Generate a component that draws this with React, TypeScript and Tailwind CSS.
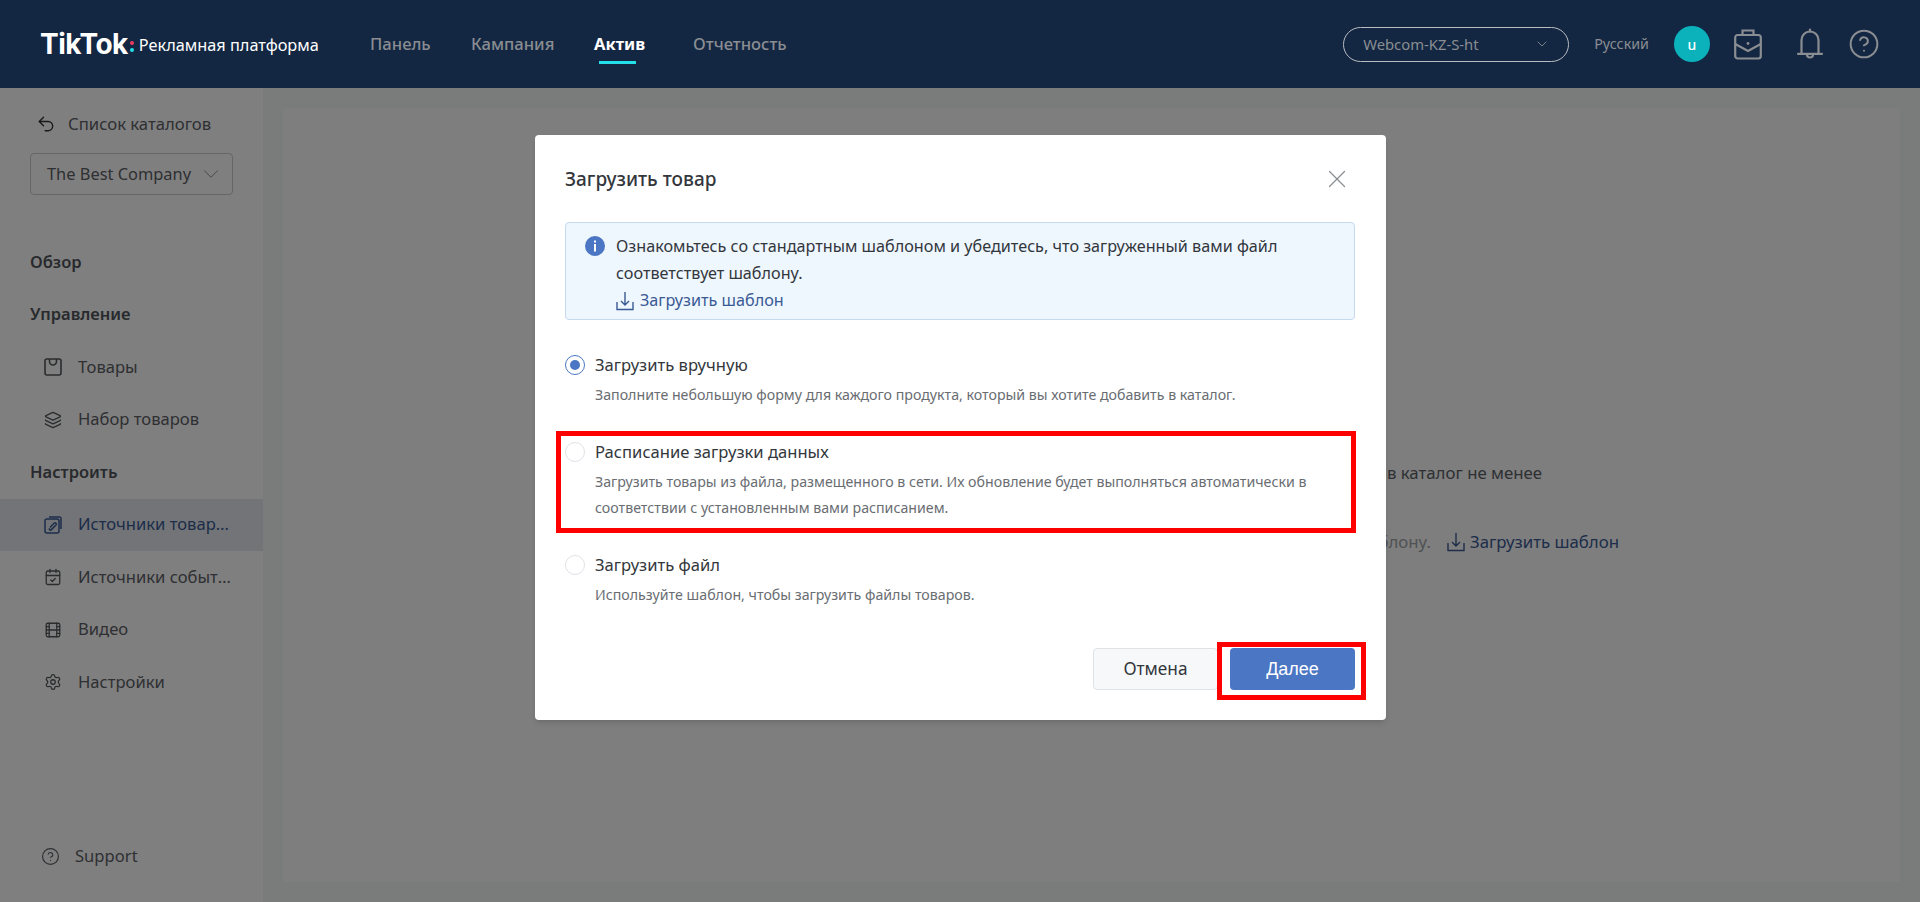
import type { ReactNode } from 'react'
import { ChevronDown, CircleHelp, Film, Layers, Settings, Undo2, X, CalendarCheck } from 'lucide-react'

const font = { fontFamily: '"Noto Sans", "Open Sans", Arial, sans-serif' }

const navItems = [
  { label: 'Панель', className: 'w-[101px]' },
  { label: 'Кампания', className: 'w-[123px]' },
  { label: 'Актив', className: 'w-[99px]', active: true },
  { label: 'Отчетность', className: '' },
]

function BagIcon() {
  return (
    <svg width="18" height="18" viewBox="0 0 18 18" fill="none" stroke="currentColor" strokeWidth="1.6">
      <rect x="1" y="1" width="16" height="16" rx="2" />
      <path d="M5.5 1v2.5a3.5 3.5 0 0 0 7 0V1" />
    </svg>
  )
}

function SourceIcon() {
  return (
    <svg width="18" height="18" viewBox="0 0 18 18" fill="none" stroke="currentColor" strokeWidth="1.5">
      <path d="M5 1h10.5A1.5 1.5 0 0 1 17 2.5V13" />
      <rect x="1" y="3" width="14" height="14" rx="2" />
      <path d="M6 11.5l4-4.2a1.3 1.3 0 0 1 2 1.7l-4.6 4.6a1.1 1.1 0 0 1-1.8-1.4" />
    </svg>
  )
}

function DownloadIcon() {
  return (
    <svg width="18" height="20" viewBox="0 0 18 20" fill="none" stroke="currentColor" strokeWidth="1.4">
      <path d="M1 11v7.5h16V11M9 1v13M5 10l4 4 4-4" />
    </svg>
  )
}

function CaseIcon() {
  return (
    <svg width="28" height="32" viewBox="0 0 28 32" fill="none" stroke="#8a8d91" strokeWidth="2.2">
      <path d="M8.5 7V2.5h11V7" />
      <rect x="1.2" y="7" width="25.6" height="23.5" rx="2.5" />
      <path d="M1.2 16 14 23l12.8-7" />
      <circle cx="14" cy="15.5" r="1.4" fill="#8a8d91" stroke="none" />
    </svg>
  )
}

function BellIcon() {
  return (
    <svg width="26" height="32" viewBox="0 0 26 32" fill="none" stroke="#8a8d91" strokeWidth="2.2" strokeLinecap="round">
      <path d="M4.5 25.5V12a8.5 8.5 0 0 1 17 0v13.5" />
      <path d="M1 25.8h24" />
      <path d="M13 1.5v2" />
      <path d="M10 26.5a3 3 0 0 0 6 0" />
    </svg>
  )
}

function SideItem({ icon, label, active }: { icon: ReactNode; label: string; active?: boolean }) {
  return (
    <div className={`flex h-[52.5px] items-center gap-[16px] pl-[44px] text-[16.6px] ${active ? 'bg-[#e6e9ee] text-[#3a5a94]' : 'text-[#5c6066]'}`}>
      <span className={`flex w-[18px] justify-center ${active ? 'text-[#3a5a94]' : 'text-[#55585c]'}`}>{icon}</span>
      <span className="w-[156px] truncate">{label}</span>
    </div>
  )
}

function SideHeading({ children }: { children: ReactNode }) {
  return <div className="flex h-[52.5px] items-center pl-[30px] text-[16.5px] font-semibold text-[#50545a]">{children}</div>
}

function RadioOption({ title, lines, checked }: { title: string; lines: string[]; checked?: boolean }) {
  return (
    <div className="flex gap-[10px]">
      <span className={`mt-[7px] flex h-[20px] w-[20px] shrink-0 items-center justify-center rounded-full border bg-white ${checked ? 'border-[#4a76c4]' : 'border-[#dfe2e6]'}`}>
        {checked && <span className="h-[10px] w-[10px] rounded-full bg-[#4a76c4]" />}
      </span>
      <div>
        <div className="text-[16.6px] leading-[34px] text-[#33373c]">{title}</div>
        {lines.map((line) => (
          <div key={line} className="text-[14.2px] leading-[26px] text-[#696d72]">{line}</div>
        ))}
      </div>
    </div>
  )
}

export default function App() {
  return (
    <div style={font} className="relative flex h-[902px] w-[1920px] flex-col overflow-hidden bg-white">
      <header className="flex h-[88px] shrink-0 items-center bg-[#132743] pl-[40px] pr-[40px]">
        <div className="flex w-[330px] items-center">
          <span className="text-[28px] font-bold leading-none tracking-[-0.5px] text-white" style={{ fontFamily: 'Inter, sans-serif' }}>TikTok</span>
          <span className="ml-[2px] mt-[4px] flex flex-col gap-[3px]">
            <span className="h-[4px] w-[4px] rounded-full bg-[#ee3a63]" />
            <span className="h-[4px] w-[4px] rounded-full bg-[#25dfe8]" />
          </span>
          <span className="ml-[5px] mt-[3px] text-[16.3px] text-white">Рекламная платформа</span>
        </div>
        <nav className="flex items-center text-[16.6px] font-medium text-[#8a8d91]">
          {navItems.map((item) => (
            <div key={item.label} className={`relative ${item.className} ${item.active ? 'font-bold text-white' : ''}`}>
              {item.label}
              {item.active && <span className="absolute left-[5px] top-[29px] h-[3px] w-[37px] bg-[#25dfe8]" />}
            </div>
          ))}
        </nav>
        <div className="ml-auto flex items-center">
          <div className="flex h-[35px] w-[226px] items-center justify-between rounded-full border border-[#b9bcc0] pl-[19px] pr-[18px] text-[14.8px] text-[#8a8d91]">
            <span>Webcom-KZ-S-ht</span>
            <ChevronDown size={16} strokeWidth={1.3} />
          </div>
          <span className="ml-[25px] text-[14.3px] text-[#8a8d91]">Русский</span>
          <span className="ml-[25px] flex h-[36px] w-[36px] items-center justify-center rounded-full bg-[#0bb2bb] text-[14px] font-medium text-white">u</span>
          <span className="ml-[24px] flex"><CaseIcon /></span>
          <span className="ml-[35px] flex"><BellIcon /></span>
          <CircleHelp className="ml-[25px] text-[#8a8d91]" size={32} strokeWidth={1.5} />
        </div>
      </header>

      <div className="flex min-h-0 flex-1">
        <aside className="flex w-[263px] shrink-0 flex-col bg-white">
          <div className="flex h-[50px] items-center gap-[12px] pl-[36px] pt-[22px] text-[16.7px] text-[#5c6066]">
            <Undo2 size={20} strokeWidth={1.7} className="text-[#333]" />
            Список каталогов
          </div>
          <div className="ml-[30px] mt-[15px] flex h-[42px] w-[203px] items-center justify-between rounded-[4px] border border-[#c9ccd0] pl-[16px] pr-[8px] text-[16.4px] text-[#5c6066]">
            <span className="whitespace-nowrap">The Best Company</span>
            <ChevronDown size={26} strokeWidth={0.9} className="text-[#8a8d91]" />
          </div>
          <div className="mt-[41px]">
            <SideHeading>Обзор</SideHeading>
            <SideHeading>Управление</SideHeading>
            <SideItem icon={<BagIcon />} label="Товары" />
            <SideItem icon={<Layers size={20} strokeWidth={1.7} />} label="Набор товаров" />
            <SideHeading>Настроить</SideHeading>
            <SideItem active icon={<SourceIcon />} label="Источники товаров" />
            <SideItem icon={<CalendarCheck size={20} strokeWidth={1.7} />} label="Источники событий" />
            <SideItem icon={<Film size={20} strokeWidth={1.7} />} label="Видео" />
            <SideItem icon={<Settings size={20} strokeWidth={1.7} />} label="Настройки" />
          </div>
          <div className="mb-[33px] mt-auto flex items-center gap-[15px] pl-[41px] text-[16.6px] text-[#5c6066]">
            <CircleHelp size={19} strokeWidth={1.5} />
            Support
          </div>
        </aside>

        <main className="flex-1 bg-[#f5f6f7] p-[20px]">
          <div className="flex h-full flex-col items-end rounded-[4px] bg-[#fdfdfd] pr-[281px] pt-[352px] text-[16.8px] text-[#5c6066]">
            <div className="mr-[77px] whitespace-nowrap">в каталог не менее</div>
            <div className="mt-[44px] flex items-center whitespace-nowrap">
              <span className="text-[#a0a4a8]">блону.</span>
              <span className="ml-[16px] flex items-center gap-[5px] text-[#3a5a94]"><DownloadIcon />Загрузить шаблон</span>
            </div>
          </div>
        </main>
      </div>

      <div className="absolute inset-x-0 bottom-0 top-[88px] bg-black/50" />

      <section className="absolute left-[535px] top-[135px] flex w-[851px] flex-col rounded-[4px] bg-white pb-[30px] pl-[30px] pr-[31px] pt-[31px] shadow-md">
        <div className="flex items-center justify-between">
          <h2 className="text-[19px] font-medium leading-[26px] text-[#33373c]">Загрузить товар</h2>
          <X size={30} strokeWidth={1} className="-my-[2px] mr-[3px] text-[#8a8d91]" />
        </div>
        <div className="mt-[30px] flex h-[98px] gap-[11px] rounded-[4px] border border-[#c4d8ee] bg-[#eef6fe] py-[10px] pl-[19px] pr-[20px] text-[16.2px] leading-[27px] text-[#33373c]">
          <svg className="mt-[3px] shrink-0" width="20" height="20" viewBox="0 0 20 20">
            <circle cx="10" cy="10" r="10" fill="#4a76c4" />
            <rect x="9" y="8" width="2" height="7.5" fill="#fff" />
            <rect x="9" y="4.5" width="2" height="2" fill="#fff" />
          </svg>
          <div>
            <div>Ознакомьтесь со стандартным шаблоном и убедитесь, что загруженный вами файл</div>
            <div>соответствует шаблону.</div>
            <div className="flex items-center gap-[6px] text-[#3a5a94]"><DownloadIcon />Загрузить шаблон</div>
          </div>
        </div>
        <div className="mt-[28px] flex flex-col gap-[27px]">
          <RadioOption checked title="Загрузить вручную" lines={['Заполните небольшую форму для каждого продукта, который вы хотите добавить в каталог.']} />
          <RadioOption title="Расписание загрузки данных" lines={['Загрузить товары из файла, размещенного в сети. Их обновление будет выполняться автоматически в', 'соответствии с установленным вами расписанием.']} />
          <RadioOption title="Загрузить файл" lines={['Используйте шаблон, чтобы загрузить файлы товаров.']} />
        </div>
        <div className="mt-[40px] flex justify-end gap-[12px]">
          <button className="h-[42px] w-[125px] rounded-[4px] border border-[#dfe2e6] bg-[#f7f8f9] text-[17.3px] text-[#33373c]">Отмена</button>
          <button className="h-[42px] w-[125px] rounded-[4px] bg-[#4a76c4] text-[18px] text-white" style={{ fontFamily: '"Liberation Sans", sans-serif' }}>Далее</button>
        </div>
      </section>

      <div className="pointer-events-none absolute left-[556px] top-[431px] h-[102px] w-[800px] border-[5px] border-[#ff0000]" />
      <div className="pointer-events-none absolute left-[1217px] top-[642px] h-[58px] w-[149px] border-[5px] border-[#ff0000]" />
    </div>
  )
}
